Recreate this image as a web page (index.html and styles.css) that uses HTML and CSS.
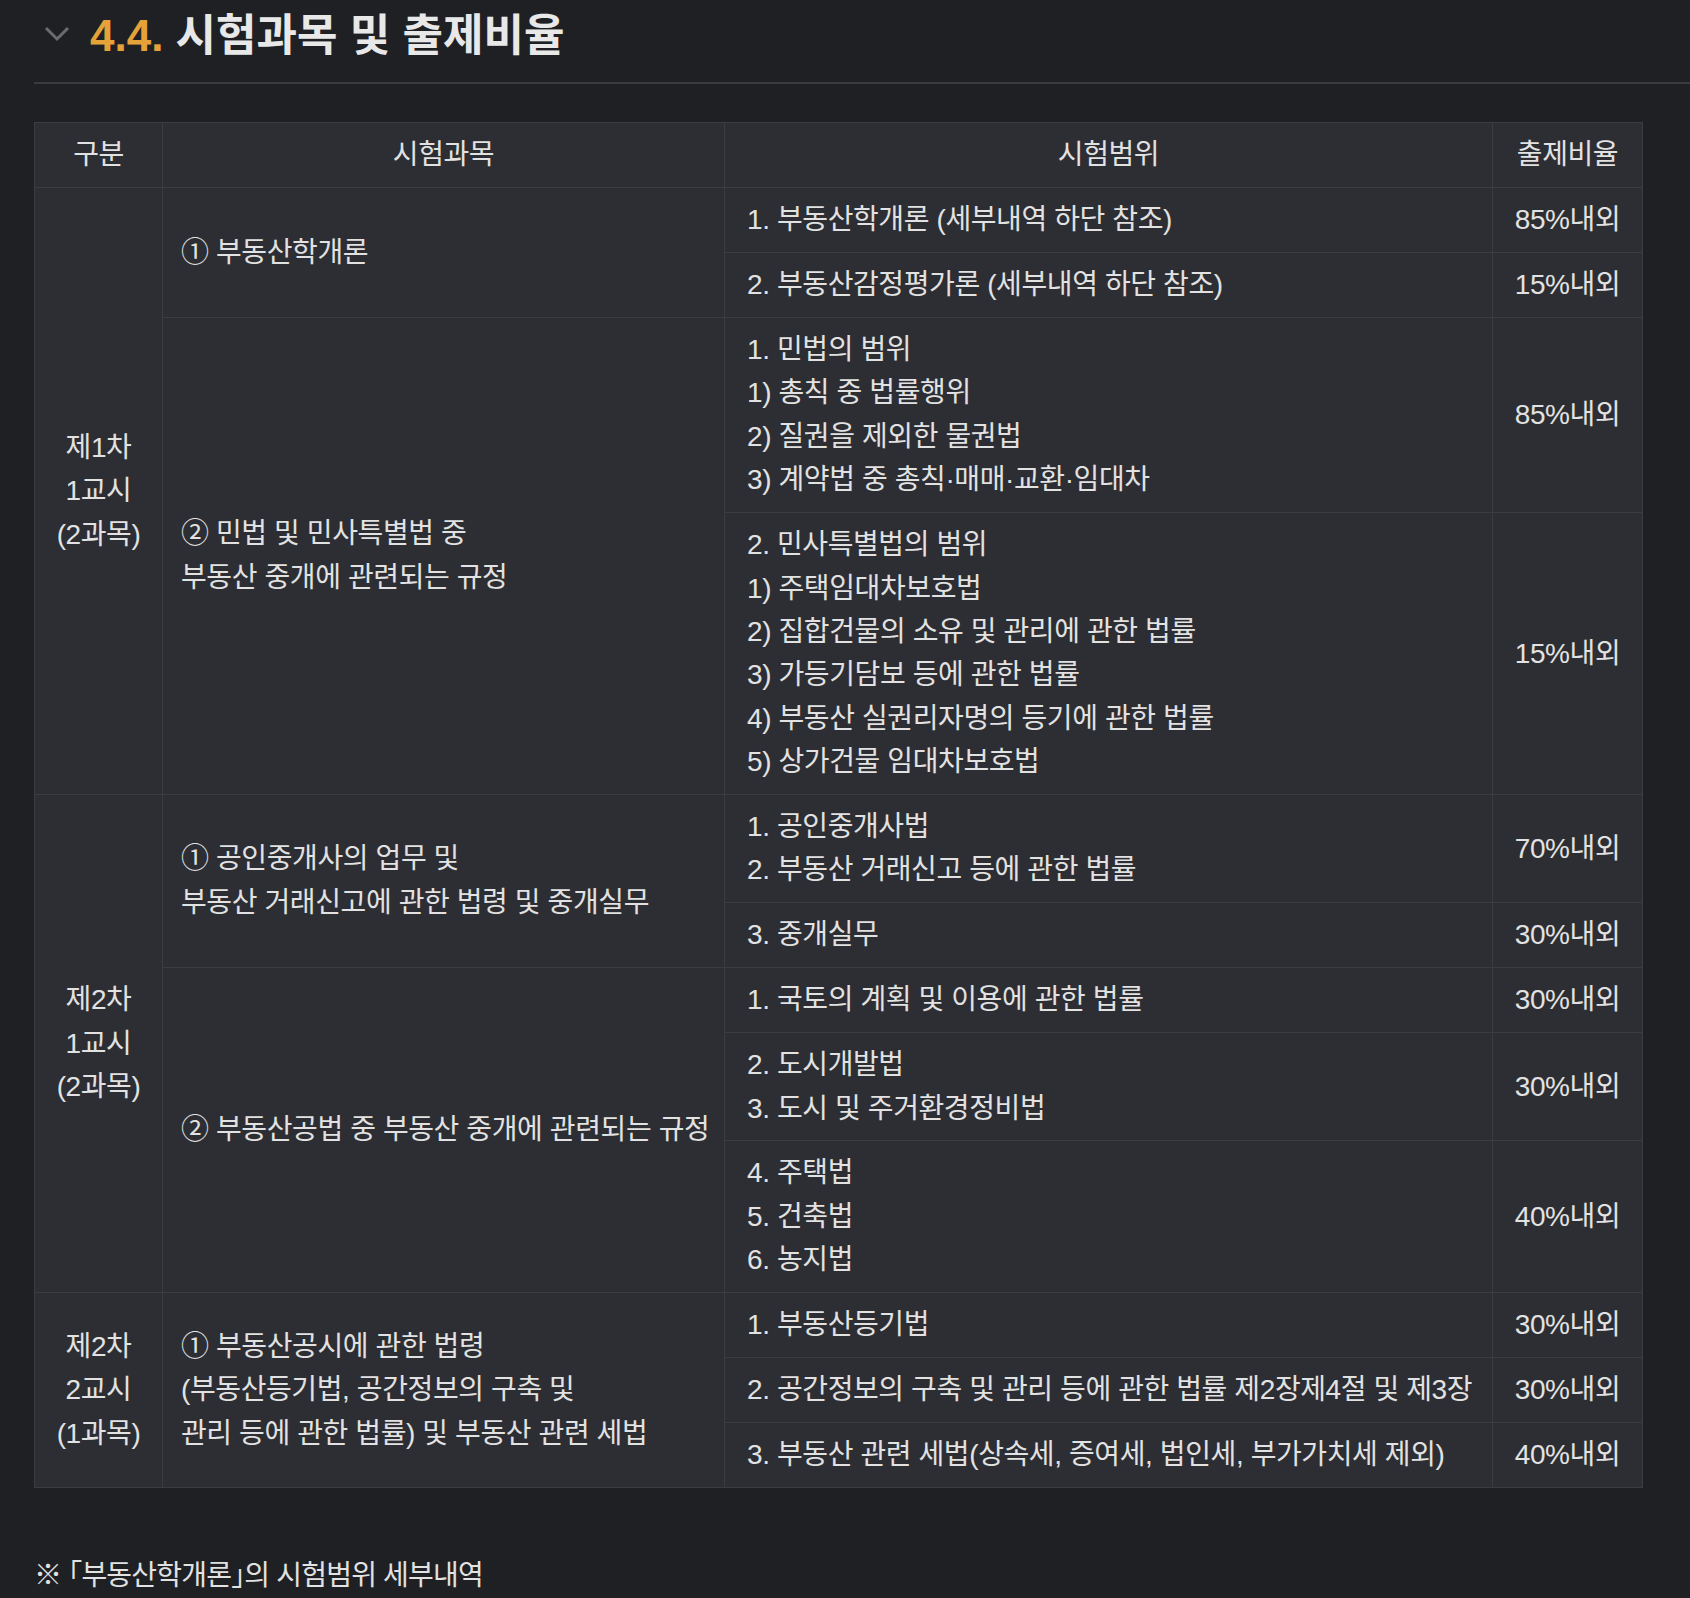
FILE: index.html
```html
<!DOCTYPE html>
<html lang="ko">
<head>
  <meta charset="UTF-8" />
  <title>4.4. 시험과목 및 출제비율</title>
  <link rel="stylesheet" href="styles.css">
</head>
<body>
  <div class="page">
    <div class="section-title">
      <svg class="chevron" width="26" height="16" viewBox="0 0 26 16">
        <polyline points="2,2 13,13 24,2" fill="none" stroke="#6a6b6f" stroke-width="3" />
      </svg>
      <h2><span class="num">4.4.</span> 시험과목 및 출제비율</h2>
    </div>

    <table class="exam">
      <colgroup>
        <col class="c1">
        <col class="c2">
        <col class="c3">
        <col class="c4">
      </colgroup>
      <thead>
        <tr>
          <th>구분</th>
          <th>시험과목</th>
          <th>시험범위</th>
          <th>출제비율</th>
        </tr>
      </thead>
      <tbody>
        <tr>
          <td rowspan="4" class="center">제1차<br>1교시<br>(2과목)</td>
          <td rowspan="2">① 부동산학개론</td>
          <td>1. 부동산학개론 (세부내역 하단 참조)</td>
          <td class="center">85%내외</td>
        </tr>
        <tr>
          <td>2. 부동산감정평가론 (세부내역 하단 참조)</td>
          <td class="center">15%내외</td>
        </tr>
        <tr>
          <td rowspan="2">② 민법 및 민사특별법 중<br>부동산 중개에 관련되는 규정</td>
          <td>1. 민법의 범위<br>1) 총칙 중 법률행위<br>2) 질권을 제외한 물권법<br>3) 계약법 중 총칙·매매·교환·임대차</td>
          <td class="center">85%내외</td>
        </tr>
        <tr>
          <td>2. 민사특별법의 범위<br>1) 주택임대차보호법<br>2) 집합건물의 소유 및 관리에 관한 법률<br>3) 가등기담보 등에 관한 법률<br>4) 부동산 실권리자명의 등기에 관한 법률<br>5) 상가건물 임대차보호법</td>
          <td class="center">15%내외</td>
        </tr>
        <tr>
          <td rowspan="5" class="center">제2차<br>1교시<br>(2과목)</td>
          <td rowspan="2">① 공인중개사의 업무 및<br>부동산 거래신고에 관한 법령 및 중개실무</td>
          <td>1. 공인중개사법<br>2. 부동산 거래신고 등에 관한 법률</td>
          <td class="center">70%내외</td>
        </tr>
        <tr>
          <td>3. 중개실무</td>
          <td class="center">30%내외</td>
        </tr>
        <tr>
          <td rowspan="3">② 부동산공법 중 부동산 중개에 관련되는 규정</td>
          <td>1. 국토의 계획 및 이용에 관한 법률</td>
          <td class="center">30%내외</td>
        </tr>
        <tr>
          <td>2. 도시개발법<br>3. 도시 및 주거환경정비법</td>
          <td class="center">30%내외</td>
        </tr>
        <tr>
          <td>4. 주택법<br>5. 건축법<br>6. 농지법</td>
          <td class="center">40%내외</td>
        </tr>
        <tr>
          <td rowspan="3" class="center">제2차<br>2교시<br>(1과목)</td>
          <td rowspan="3">① 부동산공시에 관한 법령<br>(부동산등기법, 공간정보의 구축 및<br>관리 등에 관한 법률) 및 부동산 관련 세법</td>
          <td>1. 부동산등기법</td>
          <td class="center">30%내외</td>
        </tr>
        <tr>
          <td>2. 공간정보의 구축 및 관리 등에 관한 법률 제2장제4절 및 제3장</td>
          <td class="center">30%내외</td>
        </tr>
        <tr>
          <td>3. 부동산 관련 세법(상속세, 증여세, 법인세, 부가가치세 제외)</td>
          <td class="center">40%내외</td>
        </tr>
      </tbody>
    </table>

    <p class="note">※ 「부동산학개론」의 시험범위 세부내역</p>
  </div>
</body>
</html>
```

FILE: styles.css
```css
body {
  margin: 0;
  background-color: #1f2024;
  color: #e2e2e2;
  font-family: "Liberation Sans", "Noto Sans CJK KR", sans-serif;
}

.page {
  padding: 0 0 0 34px;
}

.section-title {
  display: flex;
  align-items: flex-start;
  gap: 20px;
  padding-left: 10px;
  border-bottom: 2px solid #3a3b3f;
  height: 82px;
}

.chevron {
  display: block;
  margin-top: 26px;
}

.section-title h2 {
  margin: 9px 0 0 0;
  font-size: 44px;
  line-height: 54px;
  font-weight: bold;
  color: #e8e8e8;
}

.section-title .num {
  color: #e5a239;
}

.exam {
  margin-top: 38px;
  border-collapse: collapse;
  table-layout: fixed;
  width: 1608px;
  background-color: #2d2e33;
  font-size: 28px;
  line-height: 43.4px;
  letter-spacing: -0.4px;
}

.exam col.c1 { width: 128px; }
.exam col.c2 { width: 562px; }
.exam col.c3 { width: 768px; }
.exam col.c4 { width: 150px; }

.exam th,
.exam td {
  border: 1px solid #3b3c41;
  padding: 10.25px 18px;
  vertical-align: middle;
  text-align: left;
  white-space: nowrap;
}

.exam th {
  font-weight: normal;
  text-align: center;
}

.exam td:nth-last-child(2) {
  padding-left: 22px;
}

.exam .center {
  text-align: center;
  padding-left: 8px;
  padding-right: 8px;
}

.note {
  margin: 66px 0 0 0;
  font-size: 28px;
  line-height: 43.4px;
  letter-spacing: -0.8px;
  font-feature-settings: "halt";
}
```
